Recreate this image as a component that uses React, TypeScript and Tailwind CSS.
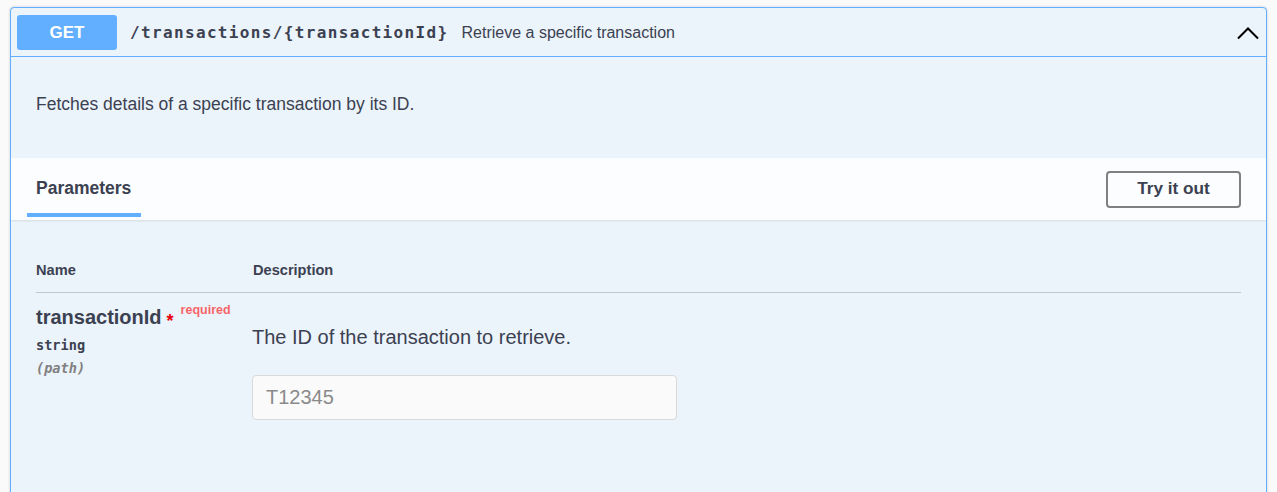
import React from "react";

export default function App() {
  const sans = { fontFamily: '"Liberation Sans", Arial, sans-serif' };
  const mono = { fontFamily: '"DejaVu Sans Mono", monospace' };
  return (
    <div className="min-h-[492px] bg-[#fafafa] px-[10px] pt-[7px]" style={sans}>
      <div className="border border-[#61affe] rounded-[4px] bg-[#ebf3fb] shadow-[0_0_3px_rgba(0,0,0,0.19)] h-[490px] overflow-hidden">
        {/* Summary */}
        <div className="flex items-center h-[49px] border-b border-[#61affe] pl-[6px] pr-[6px] pt-[1px]">
          <div className="w-[100px] h-[35px] rounded-[3px] bg-[#61affe] text-white font-bold text-[17px] flex items-center justify-center">
            GET
          </div>
          <div className="ml-[13px] font-bold text-[16px] text-[#3b4151] tracking-[1.35px]" style={mono}>
            /transactions/{"{transactionId}"}
          </div>
          <div className="ml-[13px] text-[16px] text-[#3b4151]">Retrieve a specific transaction</div>
          <div className="ml-auto">
            <svg width="24" height="14" viewBox="0 0 24 14" fill="none">
              <path d="M2 12.5 L12 2.5 L22 12.5" stroke="#000" strokeWidth="2" />
            </svg>
          </div>
        </div>
        {/* Description */}
        <div className="h-[101px] pl-[25px] pt-[34px] text-[17.5px] text-[#3b4151]">
          Fetches details of a specific transaction by its ID.
        </div>
        {/* Section header */}
        <div className="h-[62px] bg-white/80 shadow-[0_1px_2px_rgba(0,0,0,0.1)] flex items-center justify-between pl-[16px] pr-[25px]">
          <div className="self-stretch flex flex-col justify-end">
            <div className="px-[9px] text-[17.5px] font-bold text-[#3b4151] pb-[12px]">Parameters</div>
            <div className="h-[4px] bg-[#61affe] w-[114px] mb-[3px]" />
          </div>
          <button className="w-[135px] h-[37px] border-2 border-[#808080] rounded-[4px] text-[17.2px] font-bold text-[#3b4151] bg-transparent">
            Try it out
          </button>
        </div>
        {/* Table */}
        <div className="px-[25px] pt-[40px]">
          <div className="flex border-b border-[#3b4151]/25 pb-[10px] text-[14.6px] font-bold text-[#3b4151]">
            <div className="w-[217px]">Name</div>
            <div>Description</div>
          </div>
          <div className="flex pt-[9px]">
            <div className="w-[216px]">
              <div className="flex items-start">
                <span className="text-[20px] font-bold text-[#3b4151]">transactionId</span>
                <span className="ml-[5px] mt-[6px] text-[18px] text-red-600 font-bold">*</span>
                <span className="ml-[7px] -mt-[1px] text-[12.5px] text-[#ff0000]/60 font-bold">required</span>
              </div>
              <div className="text-[13.6px] font-bold text-[#3b4151] mt-[0px]" style={mono}>
                string
              </div>
              <div className="text-[13.6px] font-bold italic text-[#808080] mt-[3px]" style={mono}>
                (path)
              </div>
            </div>
            <div className="pt-[20px]">
              <div className="text-[20px] text-[#3b4151]">The ID of the transaction to retrieve.</div>
              <input
                className="mt-[23px] w-[425px] h-[45px] border border-[#d9d9d9] rounded-[4px] bg-[#fafafa] px-[13px] text-[20px] placeholder:text-[#8a8a8a] outline-none"
                placeholder="T12345"
                style={sans}
              />
            </div>
          </div>
        </div>
      </div>
    </div>
  );
}
